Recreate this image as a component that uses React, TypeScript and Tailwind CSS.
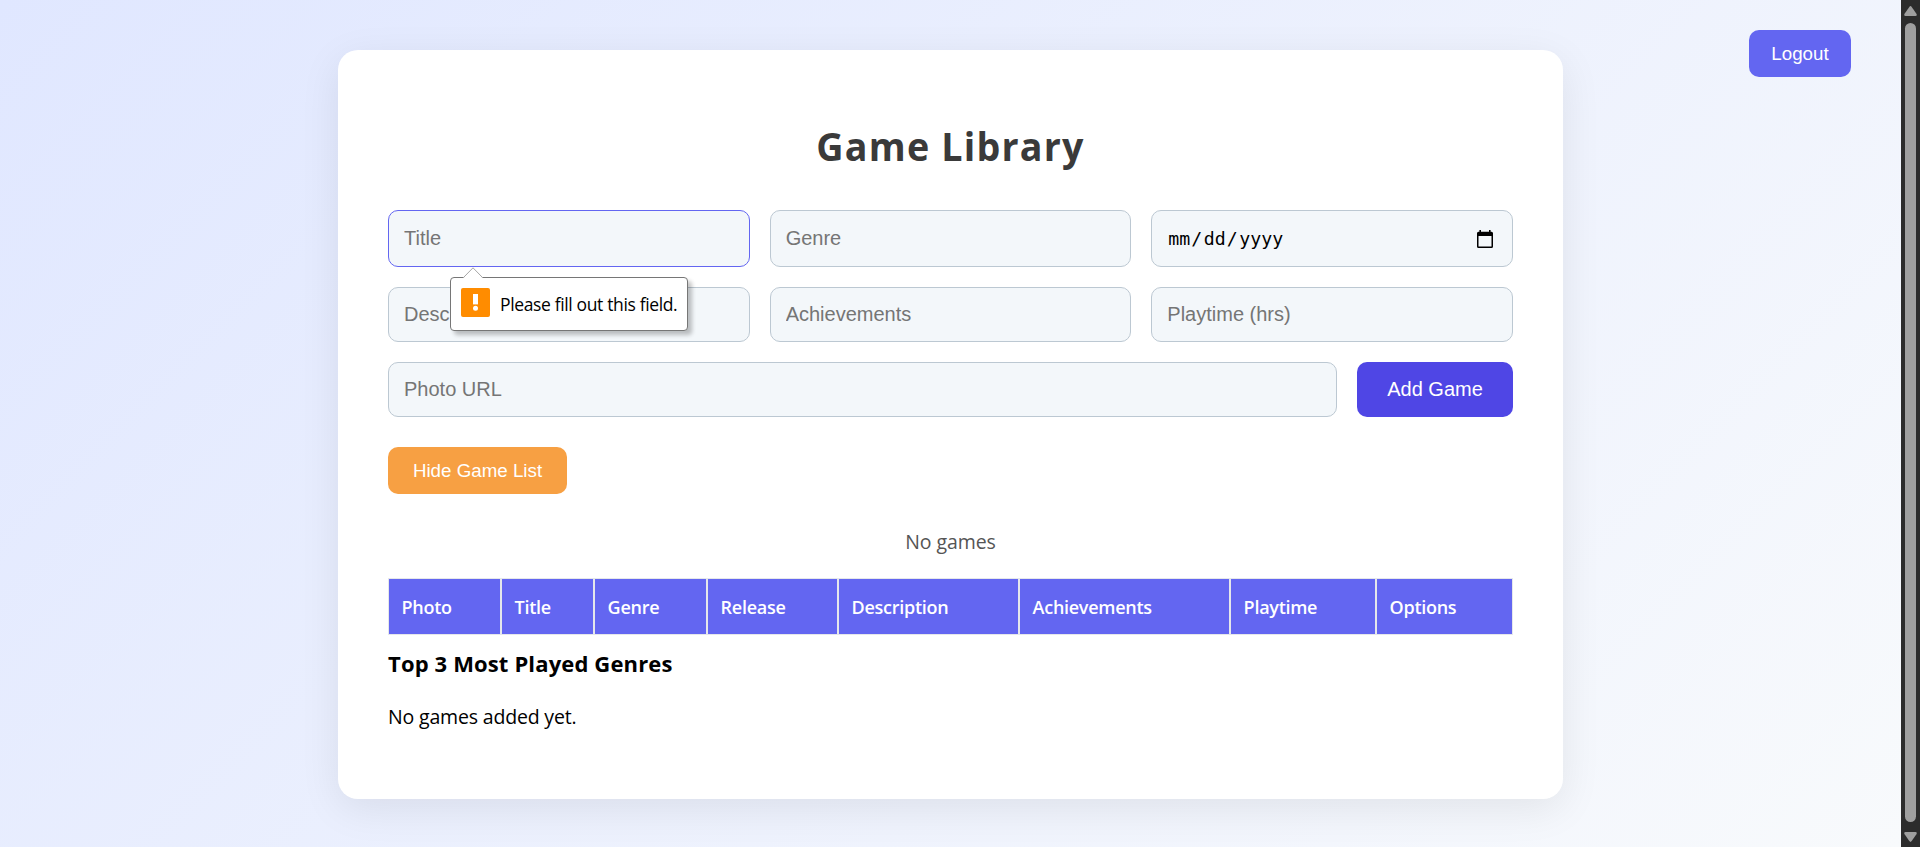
import type { ReactNode } from 'react';

const columns = [
  { label: 'Photo', width: 'w-[113px]' },
  { label: 'Title', width: 'w-[93px]' },
  { label: 'Genre', width: 'w-[113px]' },
  { label: 'Release', width: 'w-[131px]' },
  { label: 'Description', width: 'w-[181px]' },
  { label: 'Achievements', width: 'w-[211px]' },
  { label: 'Playtime', width: 'w-[146px]' },
  { label: 'Options', width: 'w-[137px]' },
];

const inputBase =
  'block min-w-0 rounded-[10px] border bg-[#f3f7fa] px-[15px] font-["Liberation_Sans",Arial,sans-serif] text-[20px] text-black outline-none placeholder:text-[#757575] placeholder:opacity-100';

function Field({ placeholder, className = '' }: { placeholder: string; className?: string }) {
  return <input type="text" placeholder={placeholder} className={`${inputBase} ${className}`} />;
}

function DateField() {
  return (
    <div className="flex h-[57px] items-center justify-between rounded-[10px] border border-[#bcc8d2] bg-[#f3f7fa] pr-[19px] pl-[15px]">
      <div className="flex font-['DejaVu_Sans_Mono',monospace] text-[18.25px] leading-6 text-black">
        <span className="px-px">mm</span>
        <span className="pr-[0.5px]">/</span>
        <span className="px-px">dd</span>
        <span className="pr-[0.5px]">/</span>
        <span className="px-px">yyyy</span>
      </div>
      <svg width="16" height="18" viewBox="0 0 16 18">
        <path
          fillRule="evenodd"
          d="M2.4 0h1.6v1.8h8V0h1.6v1.8h.9A1.5 1.5 0 0 1 16 3.3v13.2a1.5 1.5 0 0 1-1.5 1.5h-13A1.5 1.5 0 0 1 0 16.500V3.300a1.500 1.500 0 0 1 1.500-1.500h.900zM1.500 6v10.500h13V6z"
          fill="#000"
        />
      </svg>
    </div>
  );
}

function Tooltip({ children }: { children: ReactNode }) {
  return (
    <div className="absolute top-[67px] left-[62px] z-10 flex h-[54px] w-[238px] rounded-[4px] border border-[#767676] bg-white pt-[10px] pl-[10px] shadow-[4px_4px_4px_rgba(0,0,0,0.24)]">
      <svg width="22" height="12" viewBox="0 0 22 12" className="absolute -top-[11px] left-[11px]">
        <path d="M.5 12 11 .8 21.5 12z" fill="#fff" />
        <path d="M1 11 11 .8 21 11" fill="none" stroke="#a6a6a6" />
      </svg>
      <svg width="29" height="29" viewBox="0 0 29 29" className="shrink-0">
        <rect width="29" height="29" rx="2" fill="#ff8c00" />
        <rect x="12" y="6" width="5" height="10.4" fill="#fff" />
        <circle cx="14.5" cy="20.2" r="2.5" fill="#fff" />
      </svg>
      <span className="ml-[10px] pt-[3px] text-[17.5px] leading-[26px] tracking-[-0.36px] whitespace-nowrap text-black">
        {children}
      </span>
    </div>
  );
}

function Scrollbar() {
  return (
    <div className="flex h-full w-[19px] shrink-0 flex-col items-center bg-[#2c2c2c]">
      <svg width="13" height="10" viewBox="0 0 13 10" className="mt-[6px] shrink-0">
        <path d="M5.3.9Q6.5-.7 7.7.9L12.6 8Q13.2 10 11.5 10H1.5Q-.2 10 .4 8z" fill="#9f9f9f" />
      </svg>
      <div className="mt-[7px] h-[799px] w-[11px] shrink-0 rounded-full bg-[#9f9f9f]" />
      <svg width="13" height="10" viewBox="0 0 13 10" className="mt-[10px] shrink-0">
        <path d="M5.3 9.1Q6.5 10.7 7.7 9.1L12.6 2Q13.2 0 11.5 0H1.5Q-.2 0 .4 2z" fill="#9f9f9f" />
      </svg>
    </div>
  );
}

export default function App() {
  return (
    <div className="flex h-[847px] w-full overflow-hidden font-['Open_Sans','Segoe_UI',sans-serif]">
      <div className="relative flex h-full flex-1 items-start justify-center bg-[linear-gradient(135deg,#e0e7ff,#f8fafc)] pt-[50px]">
        <button className="absolute top-[30px] right-[50px] h-[47px] w-[102px] rounded-[10px] bg-[#6366f1] pt-[2px] font-['Liberation_Sans',Arial,sans-serif] text-[18.75px] text-white">
          Logout
        </button>

        <main className="h-[749px] w-[1225px] rounded-[20px] bg-white px-[50px] pt-[68px] shadow-[0_10px_40px_rgba(0,0,0,0.08)]">
          <h1 className="scale-x-[0.965] text-center text-[39px] leading-[56px] font-bold tracking-[1.25px] text-[#3a3a3a]">
            Game Library
          </h1>

          <form className="mt-[36px] flex flex-col gap-5">
            <div className="grid grid-cols-3 gap-5">
              <div className="relative">
                <Field placeholder="Title" className="h-[57px] w-full border-[#6366f1]" />
                <Tooltip>Please fill out this field.</Tooltip>
              </div>
              <Field placeholder="Genre" className="h-[57px] border-[#bcc8d2]" />
              <DateField />
            </div>
            <div className="grid grid-cols-3 gap-5">
              <Field placeholder="Description" className="h-[55px] border-[#bcc8d2]" />
              <Field placeholder="Achievements" className="h-[55px] border-[#bcc8d2]" />
              <Field placeholder="Playtime (hrs)" className="h-[55px] border-[#bcc8d2]" />
            </div>
            <div className="flex gap-5">
              <Field placeholder="Photo URL" className="h-[55px] flex-1 border-[#bcc8d2]" />
              <button
                type="button"
                className="h-[55px] w-[156px] rounded-[10px] bg-[#4f46e5] pb-[2px] font-['Liberation_Sans',Arial,sans-serif] text-[20px] text-white"
              >
                Add Game
              </button>
            </div>
          </form>

          <button className="mt-[30px] block h-[47px] w-[179px] rounded-[10px] bg-[#f7a043] pt-[2px] font-['Liberation_Sans',Arial,sans-serif] text-[18.75px] text-white">
            Hide Game List
          </button>

          <p className="mt-[34px] text-center text-[19.5px] leading-[28px] tracking-[-0.08px] text-[#555]">No games</p>

          <div className="mt-[22px] flex h-[57px] border border-[#e5e7eb] bg-[#e5e7eb]">
            {columns.map((column, index) => (
              <div
                key={column.label}
                className={`${column.width} ${index === 0 ? '' : 'border-l'} ${
                  index === columns.length - 1 ? '' : 'border-r'
                } ${index === 0 || index === columns.length - 1 ? 'shrink' : 'shrink-0'} border-[#e5e7eb] bg-[#6366f1] bg-clip-padding pt-px pl-[12.5px] text-[18px] leading-[54px] font-semibold tracking-[-0.28px] text-white`}
              >
                {column.label}
              </div>
            ))}
          </div>

          <h2 className="mt-[13px] text-[22px] leading-[30px] font-bold tracking-[0.14px] text-black">
            Top 3 Most Played Genres
          </h2>
          <p className="mt-[25px] text-[19.5px] leading-[28px] tracking-[-0.17px] text-black">No games added yet.</p>
        </main>
      </div>
      <Scrollbar />
    </div>
  );
}
